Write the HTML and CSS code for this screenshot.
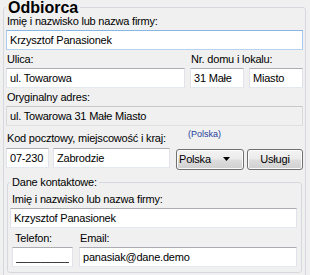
FILE: index.html
```html
<!DOCTYPE html>
<html>

<head>
  <meta charset="utf-8">
  <link rel="stylesheet" href="styles.css">
</head>

<body>
  <fieldset class="group">
    <legend class="group-title">Odbiorca</legend>

    <div class="row first">
      <label class="label">Imię i nazwisko lub nazwa firmy:</label>
      <input class="input focused" type="text" value="Krzysztof Panasionek">
    </div>

    <div class="row street-row">
      <div class="field">
        <label class="label">Ulica:</label>
        <input class="input" type="text" value="ul. Towarowa">
      </div>
      <div class="field span-2">
        <label class="label">Nr. domu i lokalu:</label>
        <div class="pair">
          <input class="input" type="text" value="31 Małe">
          <input class="input" type="text" value="Miasto">
        </div>
      </div>
    </div>

    <div class="row">
      <label class="label">Oryginalny adres:</label>
      <input class="input readonly" type="text" value="ul. Towarowa 31 Małe Miasto" readonly>
    </div>

    <div class="row">
      <div class="label-line">
        <label class="label city-label">Kod pocztowy, miejscowość i kraj:</label>
        <span class="country-hint">(Polska)</span>
      </div>
      <div class="city-row">
        <input class="input postcode" type="text" value="07-230">
        <input class="input city" type="text" value="Zabrodzie">
        <div class="btn combo">
          <span>Polska</span>
          <svg class="combo-arrow" viewBox="0 0 7 4"><path d="M0 0h7L3.5 4z" /></svg>
        </div>
        <button class="btn services">Usługi</button>
      </div>
    </div>

    <fieldset class="group inner">
      <legend class="inner-title">Dane kontaktowe:</legend>

      <div class="row inner-first">
        <label class="label">Imię i nazwisko lub nazwa firmy:</label>
        <input class="input" type="text" value="Krzysztof Panasionek">
      </div>

      <div class="row contact-row">
        <div class="field phone">
          <label class="label">Telefon:</label>
          <input class="input masked" type="text" value="_________">
        </div>
        <div class="field email">
          <label class="label">Email:</label>
          <input class="input" type="text" value="panasiak@dane.demo">
        </div>
      </div>
    </fieldset>
  </fieldset>
</body>

</html>
```

FILE: styles.css
```css
* {
  box-sizing: border-box;
}

body {
  margin: 0;
  width: 310px;
  height: 275px;
  overflow: hidden;
  background: #f0f0f0;
  font-family: "Liberation Sans", Arial, sans-serif;
  font-size: 11px;
  letter-spacing: -0.2px;
  color: #000;
}

.group {
  margin: 0 4px 0 3px;
  padding: 0 2px 12px 2px;
  min-width: 0;
  border: 1px solid #d5d9dd;
  border-radius: 3px;
}

.group-title {
  padding: 0 2px;
  font-size: 16px;
  line-height: 15px;
  font-weight: 700;
  letter-spacing: 0;
}

.row {
  display: flex;
  flex-direction: column;
  margin-top: 3px;
}

.row.first {
  margin-top: 0;
}

.label {
  display: block;
  padding-left: 1px;
  line-height: 13px;
  margin-bottom: 2px;
  white-space: nowrap;
}

.input {
  display: block;
  width: 100%;
  height: 20px;
  margin: 0;
  padding: 0 3px 1px;
  font-family: inherit;
  font-size: 11px;
  letter-spacing: -0.2px;
  color: #000;
  background: #fff;
  border: 1px solid;
  border-color: #abadb3 #e2e3ea #e3e9ef #e2e3ea;
  border-radius: 0;
  outline: none;
}

.input.focused {
  border-color: #8ab6e4 #a9caec #b6d2ee #a9caec;
}

.input.readonly {
  background: #f0f0f0;
  border-color: #c8c8c8 #dadada #e0e0e0 #dadada;
}

.street-row {
  display: grid;
  grid-template-columns: 179px 1fr;
  column-gap: 5px;
  flex-direction: row;
}

.field {
  display: flex;
  flex-direction: column;
}

.pair {
  display: grid;
  grid-template-columns: 54px 1fr;
  column-gap: 5px;
}

.label-line {
  display: flex;
  align-items: flex-start;
  height: 17px;
}

.city-label {
  flex: 0 0 182px;
  margin-top: 3px;
}

.country-hint {
  font-size: 9px;
  line-height: 11px;
  letter-spacing: 0;
  color: #1f3f9c;
}

.city-row {
  display: flex;
  align-items: flex-start;
  margin-top: 2px;
}

.postcode {
  width: 43px;
}

.city {
  width: 117px;
  margin-left: 4px;
}

.btn {
  display: flex;
  align-items: center;
  height: 21px;
  margin: 1px 0 0;
  padding: 0 4px 1px;
  font-family: inherit;
  font-size: 11px;
  letter-spacing: -0.2px;
  color: #000;
  border: 1px solid #707070;
  border-radius: 3px;
  background: linear-gradient(#f3f3f3 0%, #ebebeb 48%, #dddddd 52%, #d0d0d0 100%);
  box-shadow: inset 0 0 0 1px #fbfbfb;
}

.combo {
  width: 68px;
  margin-left: 6px;
  padding-left: 2px;
  justify-content: space-between;
}

.combo-arrow {
  width: 7px;
  height: 4px;
  margin-right: 9px;
  fill: #000;
}

.services {
  width: 56px;
  margin-left: 3px;
  justify-content: center;
}

.group.inner {
  margin: 6px 1px 0 1px;
  padding: 0 4px 5px 2px;
}

.inner-title {
  padding: 0 2px;
  line-height: 13px;
}

.row.inner-first {
  margin-top: 4px;
}

.inner-first .label {
  padding-left: 2px;
}

.contact-row {
  display: flex;
  flex-direction: row;
  margin-top: 4px;
}

.phone {
  width: 61px;
  margin-left: 2px;
}

.phone .label {
  padding-left: 3px;
}

.email {
  flex: 1;
  margin-left: 6px;
}

.masked {
  letter-spacing: 0;
}
```
